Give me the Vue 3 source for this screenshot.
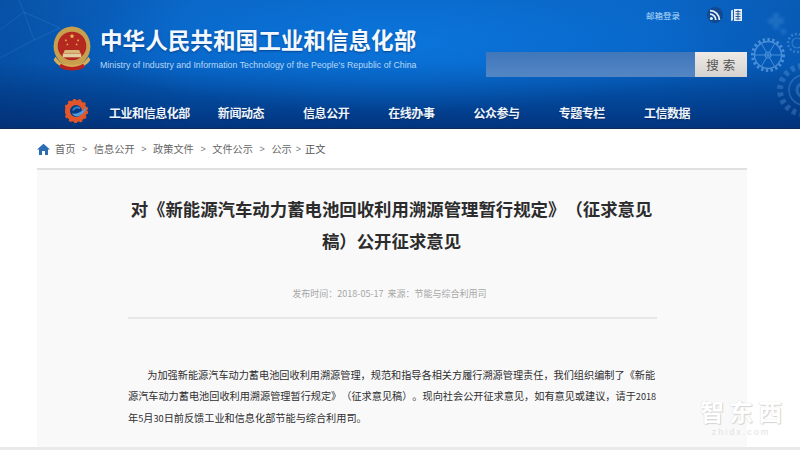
<script setup>
const nav = ['新闻动态', '信息公开', '在线办事', '公众参与', '专题专栏', '工信数据']
const crumbs = ['信息公开', '政策文件', '文件公示']
const stars = [[19, 10, 2.6], [13, 14, 1.3], [25, 14, 1.3], [14.5, 18, 1.3], [23.5, 18, 1.3]]
function starPoints([cx, cy, r]) {
  const pts = []
  for (let i = 0; i < 10; i++) {
    const a = -Math.PI / 2 + (i * Math.PI) / 5
    const q = i % 2 ? r * 0.42 : r
    pts.push(`${(cx + q * Math.cos(a)).toFixed(2)},${(cy + q * Math.sin(a)).toFixed(2)}`)
  }
  return pts.join(' ')
}
const spokes = [0, 60, 120, 180, 240, 300].map((d) => ({
  x: (17 * Math.cos((d * Math.PI) / 180)).toFixed(1),
  y: (17 * Math.sin((d * Math.PI) / 180)).toFixed(1),
}))
</script>

<template>
  <div class="page">
    <header class="header">
      <svg class="decor" width="800" height="129" viewBox="0 0 800 129" aria-hidden="true">
        <g fill="none" stroke="#8cc4ff" stroke-width="0.8" opacity="0.16">
          <path d="M0 30 L24 12 L60 28 M24 12 L18 -2 M0 58 L34 40 L24 12 M34 40 L60 28" />
        </g>
        <g class="soft" fill="none" stroke="#7fb9f5">
          <g opacity="0.55" transform="translate(768 55)">
            <circle r="15.500" stroke-width="3" stroke-dasharray="2.400 2.400" />
            <circle r="13.500" stroke-width="1.400" />
            <circle r="3" stroke-width="1.200" />
            <line v-for="(s, i) in spokes" :key="i" x1="0" y1="0" :x2="Number(s.x) * 0.78" :y2="Number(s.y) * 0.78" stroke-width="1" />
          </g>
          <g opacity="0.36" transform="translate(797 43)">
            <circle r="9" stroke-width="2.400" stroke-dasharray="2 2" />
            <circle r="5" stroke-width="1.200" />
          </g>
          <g opacity="0.26" transform="translate(804 90)">
            <circle r="24" stroke-width="6" stroke-dasharray="4 3.600" />
            <circle r="15" stroke-width="1.600" />
            <circle r="7" stroke-width="3" />
          </g>
        </g>
        <g class="blurred" fill="#4d94dc" opacity="0.3">
          <path d="M768 18h5v-5h6v5h5v6h-5v5h-6v-5h-5z" />
          <path d="M782 28l5 3-2 4-5-3z" />
        </g>
      </svg>

      <div class="top">
        <div class="brand">
          <svg class="emblem" width="40" height="45" viewBox="0 0 38 44" aria-hidden="true">
            <ellipse cx="19" cy="20" rx="18" ry="19.500" fill="#c79f4d" />
            <circle cx="19" cy="19.500" r="14" fill="#b5281f" />
            <polygon v-for="(s, i) in stars" :key="i" :points="starPoints(s)" fill="#e7c15f" />
            <path d="M10 27h18v3.600H10z" fill="#e2cfa0" />
            <path d="M12 23.500h14l1.500 3.500h-17z" fill="#d7b878" />
            <path d="M3 30c3 6 9 8 16 8s13-2 16-8l2 3c-3 6-10 8-18 8S4 39 1 33z" fill="#d8ad55" />
            <path d="M8 37c4 2.600 8 3 11 3s7-.4 11-3l1.500 3.400c-4 2.300-8 3.100-12.500 3.100s-8.500-.8-12.500-3.100z" fill="#b8231d" />
          </svg>
          <div class="brand-text">
            <h1 class="site-name">中华人民共和国工业和信息化部</h1>
            <p class="site-en">Ministry of Industry and Information Technology of the People's Republic of China</p>
          </div>
        </div>
        <div class="tools">
          <div class="links">
            <a class="mail">邮箱登录</a>
            <span class="round">
              <svg width="12" height="12" viewBox="0 0 12 12" aria-hidden="true">
                <circle cx="2.400" cy="9.600" r="1.500" fill="#e8f2fc" />
                <path d="M1 5.200a5.800 5.800 0 0 1 5.800 5.800M1 1.600A9.400 9.400 0 0 1 10.400 11" fill="none" stroke="#e8f2fc" stroke-width="1.800" />
              </svg>
            </span>
            <span class="round book">
              <svg width="13" height="14" viewBox="0 0 13 14" aria-hidden="true">
                <path d="M1 2.500l2-.8v10.600l-2 .7z" fill="#cfe2f5" />
                <rect x="4" y="1" width="8" height="12" fill="#e6f0fa" />
                <path d="M5.500 3.500h5M5.500 6h5M5.500 8.500h5M5.500 11h5M8 2v10" stroke="#24508a" stroke-width="0.900" />
              </svg>
            </span>
          </div>
          <div class="search">
            <div class="search-input"></div>
            <button class="search-btn" type="button">搜 索</button>
          </div>
        </div>
      </div>

      <nav class="nav">
        <svg class="nav-logo" width="24" height="24" viewBox="0 0 24 24" aria-hidden="true">
          <circle cx="11" cy="12" r="8.500" fill="none" stroke="#e2562a" stroke-width="5" />
          <circle cx="11" cy="12" r="11" fill="none" stroke="#e2562a" stroke-width="2.400" stroke-dasharray="2.800 2.600" />
          <path d="M7 14c3 2 9 0 14-6 1 1-2 7-7 9-3 1-6 0-7-3z" fill="#4f9bdf" />
          <path d="M8 11.500c1-3 5-4 7-2" fill="none" stroke="#3c7fc8" stroke-width="2" />
        </svg>
        <a class="nav-item first">工业和信息化部</a>
        <a v-for="n in nav" :key="n" class="nav-item">{{ n }}</a>
      </nav>
    </header>

    <main class="main">
      <div class="crumbs">
        <svg width="13" height="12" viewBox="0 0 13 12" aria-hidden="true">
          <path d="M6.500 .8L13 6.600h-2V12H8V8H5v4H2V6.600H0z" fill="#2a6db5" />
        </svg>
        <span class="crumb home">首页</span>
        <template v-for="c in crumbs" :key="c">
          <span class="sep">&gt;</span>
          <span class="crumb">{{ c }}</span>
        </template>
        <span class="sep">&gt;</span>
        <span class="crumb">公示</span>
        <span class="sep tight">&gt;</span>
        <span class="crumb now">正文</span>
      </div>

      <article class="card">
        <h2 class="title">对《新能源汽车动力蓄电池回收利用溯源管理暂行规定》（征求意见稿）公开征求意见</h2>
        <p class="meta">发布时间：2018-05-17&nbsp;&nbsp;来源：节能与综合利用司&nbsp;&nbsp;&nbsp;</p>
        <p class="body">为加强新能源汽车动力蓄电池回收利用溯源管理，规范和指导各相关方履行溯源管理责任，我们组织编制了《新能源汽车动力蓄电池回收利用溯源管理暂行规定》（征求意见稿）。现向社会公开征求意见，如有意见或建议，请于<span class="num">2018</span>年<span class="num">5</span>月<span class="num">30</span>日前反馈工业和信息化部节能与综合利用司。</p>
      </article>

      <div class="mark">
        <span class="mark-cn">智东西</span>
        <span class="mark-en">zhidx.com</span>
      </div>
    </main>
    <div class="foot"></div>
  </div>
</template>

<style>
html, body { margin: 0; background: #fff; overflow: hidden; }
</style>

<style scoped>
.page {
  width: 800px;
  height: 450px;
  display: flex;
  flex-direction: column;
  overflow: hidden;
  font-family: "Noto Sans CJK SC", "Liberation Sans", sans-serif;
  background: #fff;
  text-spacing-trim: space-all;
}
.header {
  position: relative;
  height: 129px;
  flex: none;
  overflow: hidden;
  background:
    radial-gradient(ellipse 330px 70px at 400px 42px, rgba(12, 122, 226, .75), rgba(12, 122, 226, 0)),
    linear-gradient(90deg, rgba(4, 42, 104, .34), rgba(4, 42, 104, 0) 24%, rgba(4, 42, 104, 0) 82%, rgba(4, 42, 104, .18)),
    linear-gradient(180deg, #0a66c6 0%, #0764c6 48%, #034a9e 74%, #02347e 100%);
  border-bottom: 1px solid #0f2c56;
  box-sizing: border-box;
}
.decor { position: absolute; left: 0; top: 0; }
.soft { filter: blur(.4px); }
.blurred { filter: blur(1.5px); }
.top {
  position: relative;
  display: flex;
  justify-content: space-between;
  height: 98px;
  padding: 0 53px 0 52px;
}
.brand { display: flex; gap: 8px; padding-top: 26px; }
.emblem { flex: none; }
.site-name {
  margin: -1px 0 0;
  font-size: 22.600px;
  line-height: 30px;
  font-weight: 700;
  color: #f4f9ff;
  white-space: nowrap;
  text-shadow: 0 1px 2px rgba(2, 40, 100, .6);
}
.site-en {
  margin: 3px 0 0;
  font-family: "Liberation Sans", sans-serif;
  font-size: 8.800px;
  line-height: 14px;
  color: #b9d8f6;
  white-space: nowrap;
}
.tools { width: 261px; display: flex; flex-direction: column; }
.links {
  display: flex;
  align-items: center;
  height: 30px;
  padding-left: 160px;
}
.mail { font-size: 8.500px; color: #b6dcfa; width: 60px; white-space: nowrap; }
.round {
  width: 16px;
  height: 16px;
  display: flex;
  align-items: center;
  justify-content: center;
  background: #124a92;
  border-radius: 50%;
  margin-left: 1px;
}
.round.book { background: transparent; margin-left: 5px; }
.search { display: flex; height: 25px; margin-top: 22px; }
.search-input {
  flex: 1;
  background: linear-gradient(180deg, #3f77ba, #5486c4);
}
.search-btn {
  width: 52px;
  padding: 0;
  border: 0;
  background: linear-gradient(180deg, #eeeae6, #d4d2d0);
  color: #555;
  font-family: inherit;
  font-size: 12.500px;
  letter-spacing: .5px;
}
.nav {
  position: relative;
  display: flex;
  align-items: center;
  gap: 39px;
  padding-left: 65px;
  height: 29px;
}
.nav-logo { flex: none; margin-right: -19px; margin-top: -4px; }
.nav-item {
  font-size: 12px;
  font-weight: 700;
  letter-spacing: -.45px;
  color: #eef5fc;
  white-space: nowrap;
  text-shadow: 0 1px 1px rgba(0, 30, 80, .6);
}
.nav-item.first { margin-right: -11px; }

.main { position: relative; flex: 1; min-height: 0; }
.crumbs {
  display: flex;
  align-items: center;
  height: 39px;
  padding-left: 37px;
  font-size: 10.200px;
  color: #666;
}
.crumb { white-space: nowrap; }
.home { margin-left: 5px; }
.sep { margin: 0 6.600px; font-size: 9px; color: #777; font-family: "Liberation Sans", sans-serif; }
.sep.tight { margin: 0 4px; }
.now { color: #555; }
.card {
  margin: 0 53px 0 37px;
  height: 279px;
  box-sizing: border-box;
  background: #f9f9fa;
  border-top: 2px solid #e0e0e0;
  padding: 23px 90px 0 91px;
  overflow: hidden;
}
.title {
  margin: 0;
  padding-right: 2px;
  font-size: 17.400px;
  line-height: 32px;
  font-weight: 700;
  color: #2c2c2c;
  text-align: center;
}
.meta {
  margin: 30px 0 0;
  padding-bottom: 16px;
  border-bottom: 2px solid #e6e6e8;
  font-size: 9px;
  line-height: 14px;
  color: #a6a6a6;
  text-align: center;
}
.body {
  margin: 45px -2px 0 0;
  font-size: 10.160px;
  line-height: 21px;
  text-indent: 1.900em;
  color: #2e2e2e;
}
.num { font-size: 9.200px; }
.mark {
  position: absolute;
  right: 14px;
  bottom: 9px;
  width: 90px;
  display: flex;
  flex-direction: column;
  align-items: center;
  color: #fff;
}
.mark-cn {
  font-size: 24px;
  line-height: 26px;
  font-weight: 700;
  letter-spacing: 5px;
  padding-left: 5px;
  white-space: nowrap;
  text-shadow: 0 0 1px #cfcfcf, 1px 1px 1px #d4d4d4;
}
.mark-en {
  margin-top: 3px;
  font-size: 9px;
  line-height: 11px;
  letter-spacing: 2px;
  font-family: "Liberation Sans", sans-serif;
  color: #e2e2e2;
}
.foot { height: 3px; flex: none; background: #e9e9e9; }
</style>
